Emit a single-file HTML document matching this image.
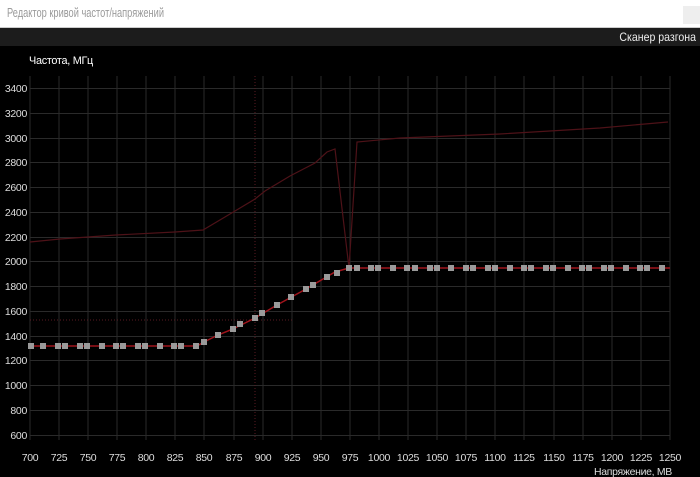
<!DOCTYPE html>
<html><head><meta charset="utf-8"><style>
html,body{margin:0;padding:0;width:700px;height:477px;overflow:hidden;background:#000;font-family:"Liberation Sans","Noto Sans CJK SC",sans-serif}
.t{position:absolute;left:0;top:0;width:700px;height:27px;background:#fff;border-bottom:1px solid #ccc}
.t span{position:absolute;left:7px;top:6px;font-size:12.5px;color:#9a9a9a;transform:scaleX(0.74);transform-origin:0 0;white-space:nowrap}
.x{position:absolute;left:683px;top:6px;width:17px;height:18px;background:#eee}
.b{position:absolute;left:0;top:28px;width:700px;height:18px;background:#1c1c1c}
.b span{position:absolute;right:4px;top:2px;font-size:12px;color:#eee;transform:scaleX(0.88);transform-origin:100% 0;white-space:nowrap}
svg{position:absolute;left:0;top:0}
</style></head><body>
<div class="t"><span>Редактор кривой частот/напряжений</span><div class="x"></div></div>
<div class="b"><span>Сканер разгона</span></div>
<svg width="700" height="477" viewBox="0 0 700 477" font-family="Liberation Sans, sans-serif" font-size="10.5" letter-spacing="-0.3">
<text x="29" y="64" fill="#fff" font-size="11" textLength="64" lengthAdjust="spacingAndGlyphs">Частота, МГц</text>
<g stroke="#2a2a2a" stroke-width="1">
<path d="M30 76V440M59 76V440M88 76V440M117 76V440M146 76V440M175 76V440M204 76V440M234 76V440M263 76V440M292 76V440M321 76V440M350 76V440M379 76V440M408 76V440M437 76V440M466 76V440M495 76V440M524 76V440M554 76V440M583 76V440M612 76V440M641 76V440M670 76V440"/>
<path d="M30 88.5H670M30 113.5H670M30 138.5H670M30 162.5H670M30 187.5H670M30 212.5H670M30 237.5H670M30 261.5H670M30 286.5H670M30 311.5H670M30 336.5H670M30 360.5H670M30 385.5H670M30 410.5H670M30 435.5H670"/>
</g>
<path d="M255 76V440M30 320H292" stroke="#5a1a22" stroke-dasharray="1 2"/>
<g fill="#ddd" text-anchor="end">
<text x="27" y="92">3400</text><text x="27" y="117">3200</text><text x="27" y="142">3000</text><text x="27" y="166">2800</text><text x="27" y="191">2600</text><text x="27" y="216">2400</text><text x="27" y="241">2200</text><text x="27" y="265">2000</text><text x="27" y="290">1800</text><text x="27" y="315">1600</text><text x="27" y="340">1400</text><text x="27" y="364">1200</text><text x="27" y="389">1000</text><text x="27" y="414">800</text><text x="27" y="439">600</text>
</g>
<g fill="#ddd" text-anchor="middle">
<text x="30" y="461">700</text><text x="59" y="461">725</text><text x="88" y="461">750</text><text x="117" y="461">775</text><text x="146" y="461">800</text><text x="175" y="461">825</text><text x="204" y="461">850</text><text x="234" y="461">875</text><text x="263" y="461">900</text><text x="292" y="461">925</text><text x="321" y="461">950</text><text x="350" y="461">975</text><text x="379" y="461">1000</text><text x="408" y="461">1025</text><text x="437" y="461">1050</text><text x="466" y="461">1075</text><text x="495" y="461">1100</text><text x="524" y="461">1125</text><text x="554" y="461">1150</text><text x="583" y="461">1175</text><text x="612" y="461">1200</text><text x="641" y="461">1225</text><text x="670" y="461">1250</text>
</g>
<text x="594" y="475" fill="#ddd" textLength="78" lengthAdjust="spacingAndGlyphs">Напряжение, МВ</text>
<polyline fill="none" stroke="#4e1218" stroke-width="1.2" points="30,242 60,239 116,235 175,232 203,230 230,214 255,199 265,191 290,176 315,163 327,152 335,149 349,268 357,142 400,138 500,134 600,128 668,122"/>
<polyline fill="none" stroke="#a0141c" stroke-width="1.5" points="30,346 197,346 204,342 218,335 233,329 255,318 277,305 306,289 335,272 349,268 670,268"/>
<g fill="#9a9a9a">
<rect x="28" y="343" width="6" height="6"/><rect x="40" y="343" width="6" height="6"/><rect x="55" y="343" width="6" height="6"/><rect x="62" y="343" width="6" height="6"/><rect x="77" y="343" width="6" height="6"/><rect x="84" y="343" width="6" height="6"/><rect x="99" y="343" width="6" height="6"/><rect x="113" y="343" width="6" height="6"/><rect x="120" y="343" width="6" height="6"/><rect x="135" y="343" width="6" height="6"/><rect x="142" y="343" width="6" height="6"/><rect x="157" y="343" width="6" height="6"/><rect x="171" y="343" width="6" height="6"/><rect x="178" y="343" width="6" height="6"/><rect x="193" y="343" width="6" height="6"/>
<rect x="201" y="339" width="6" height="6"/><rect x="215" y="332" width="6" height="6"/><rect x="230" y="326" width="6" height="6"/><rect x="237" y="321" width="6" height="6"/><rect x="252" y="315" width="6" height="6"/><rect x="259" y="310" width="6" height="6"/><rect x="274" y="302" width="6" height="6"/><rect x="288" y="294" width="6" height="6"/><rect x="303" y="286" width="6" height="6"/><rect x="310" y="282" width="6" height="6"/><rect x="324" y="274" width="6" height="6"/><rect x="334" y="270" width="6" height="6"/>
<rect x="346" y="265" width="6" height="6"/><rect x="354" y="265" width="6" height="6"/><rect x="368" y="265" width="6" height="6"/><rect x="375" y="265" width="6" height="6"/><rect x="390" y="265" width="6" height="6"/><rect x="404" y="265" width="6" height="6"/><rect x="412" y="265" width="6" height="6"/><rect x="427" y="265" width="6" height="6"/><rect x="434" y="265" width="6" height="6"/><rect x="448" y="265" width="6" height="6"/><rect x="463" y="265" width="6" height="6"/><rect x="470" y="265" width="6" height="6"/><rect x="485" y="265" width="6" height="6"/><rect x="492" y="265" width="6" height="6"/><rect x="507" y="265" width="6" height="6"/><rect x="521" y="265" width="6" height="6"/><rect x="528" y="265" width="6" height="6"/><rect x="543" y="265" width="6" height="6"/><rect x="550" y="265" width="6" height="6"/><rect x="565" y="265" width="6" height="6"/><rect x="579" y="265" width="6" height="6"/><rect x="586" y="265" width="6" height="6"/><rect x="601" y="265" width="6" height="6"/><rect x="608" y="265" width="6" height="6"/><rect x="623" y="265" width="6" height="6"/><rect x="637" y="265" width="6" height="6"/><rect x="644" y="265" width="6" height="6"/><rect x="659" y="265" width="6" height="6"/>
</g>
</svg>
</body></html>
